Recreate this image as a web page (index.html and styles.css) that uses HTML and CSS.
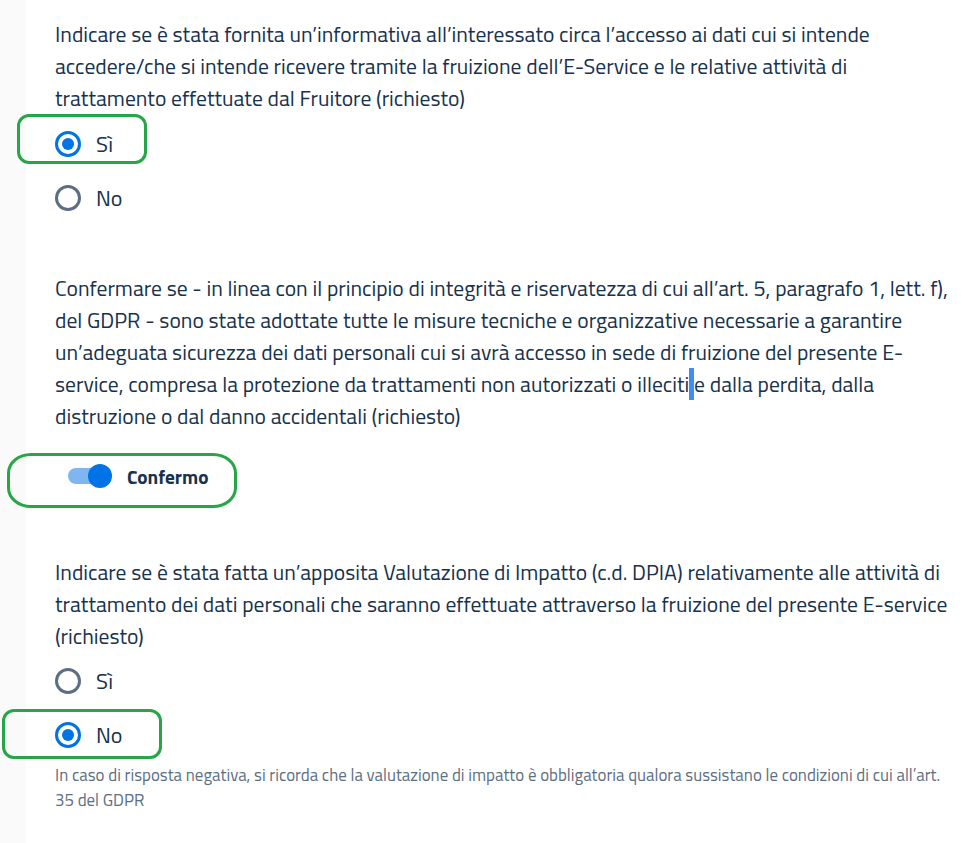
FILE: index.html
```html
<!DOCTYPE html>
<html lang="it">
<head>
<meta charset="utf-8">
<title>Form</title>
<link rel="stylesheet" href="styles.css">
</head>
<body>
<div class="page">
  <aside class="strip"></aside>
  <main class="content">
    <section class="q q1">
      <p class="question">Indicare se è stata fornita un’informativa all’interessato circa l’accesso ai dati cui si intende accedere/che si intende ricevere tramite la fruizione dell’E-Service e le relative attività di trattamento effettuate dal Fruitore (richiesto)</p>
      <div class="radios">
        <label class="option">
          <span class="radio checked"></span><span class="label">Sì</span>
          <span class="mark mark1"></span>
        </label>
        <label class="option">
          <span class="radio"></span><span class="label">No</span>
        </label>
      </div>
    </section>

    <section class="q q2">
      <p class="question">Confermare se - in linea con il principio di integrità e riservatezza di cui all’art. 5, paragrafo 1, lett. f), del GDPR - sono state adottate tutte le misure tecniche e organizzative necessarie a garantire un’adeguata sicurezza dei dati personali cui si avrà accesso in sede di fruizione del presente E-service, compresa la protezione da trattamenti non autorizzati o illeciti<span class="sel"> </span>e dalla perdita, dalla distruzione o dal danno accidentali (richiesto)</p>
      <div class="switch-row">
        <span class="switch"><span class="track"></span><span class="knob"></span></span>
        <span class="switch-label">Confermo</span>
        <span class="mark mark2"></span>
      </div>
    </section>

    <section class="q q3">
      <p class="question">Indicare se è stata fatta un’apposita Valutazione di Impatto (c.d. DPIA) relativamente alle attività di trattamento dei dati personali che saranno effettuate attraverso la fruizione del presente E-service (richiesto)</p>
      <div class="radios">
        <label class="option">
          <span class="radio"></span><span class="label">Sì</span>
        </label>
        <label class="option">
          <span class="radio checked"></span><span class="label">No</span>
          <span class="mark mark3"></span>
        </label>
      </div>
      <p class="helper">In caso di risposta negativa, si ricorda che la valutazione di impatto è obbligatoria qualora sussistano le condizioni di cui all’art. 35 del GDPR</p>
    </section>
  </main>
</div>
</body>
</html>
```

FILE: styles.css
```css
* { box-sizing: border-box; }
html, body { margin: 0; padding: 0; background: #fff; }
body {
  font-family: "Titillium Web", Lato, "Open Sans", sans-serif;
  color: #17324d;
}
.page {
  display: flex;
  min-height: 843px;
}
.strip {
  width: 26px;
  flex: none;
  background: #fafafa;
}
.content {
  padding: 18px 0 0 29px;
  width: 926px;
}
.question {
  margin: 0;
  font-size: 21.6px;
  line-height: 32px;
}
.radios {
  display: flex;
  flex-direction: column;
  padding-top: 3px;
}
.q3 .radios { padding-top: 2px; }
.option {
  position: relative;
  display: flex;
  align-items: center;
  height: 54px;
}
.radio {
  width: 26px;
  height: 26px;
  border-radius: 50%;
  border: 3px solid #5c6f82;
  flex: none;
  display: flex;
  align-items: center;
  justify-content: center;
}
.radio.checked {
  border-color: #0073e6;
}
.radio.checked::after {
  content: "";
  width: 12px;
  height: 12px;
  border-radius: 50%;
  background: #0073e6;
}
.label {
  margin-left: 15px;
  font-size: 22px;
}
.mark {
  position: absolute;
  border: 3px solid #26a646;
  pointer-events: none;
}
.mark1 { left: -38px; top: -3px; width: 130px; height: 50px; border-radius: 12px; }
.mark3 { left: -53px; top: 1px; width: 160px; height: 50px; border-radius: 12px; }
.mark2 { left: -48px; top: -3px; width: 230px; height: 55px; border-radius: 24px / 20px; }

.q2 { margin-top: 47px; }
.sel { background: #3d8ef5; }
.switch-row {
  position: relative;
  display: flex;
  align-items: center;
  height: 40px;
  margin-top: 24px;
}
.switch {
  position: relative;
  width: 44px;
  height: 24px;
  margin-left: 13px;
  flex: none;
}
.track {
  position: absolute;
  left: 0;
  top: 4px;
  width: 40px;
  height: 16px;
  border-radius: 8px;
  background: #7fb6ef;
}
.knob {
  position: absolute;
  left: 20px;
  top: 0;
  width: 24px;
  height: 24px;
  border-radius: 50%;
  background: #0073e6;
}
.switch-label {
  margin-left: 15px;
  font-size: 19.3px;
  font-weight: 700;
}
.q3 { margin-top: 60px; }
.helper {
  margin: 1px 0 0;
  font-size: 16.9px;
  line-height: 25px;
  color: #5c6f82;
}
```
